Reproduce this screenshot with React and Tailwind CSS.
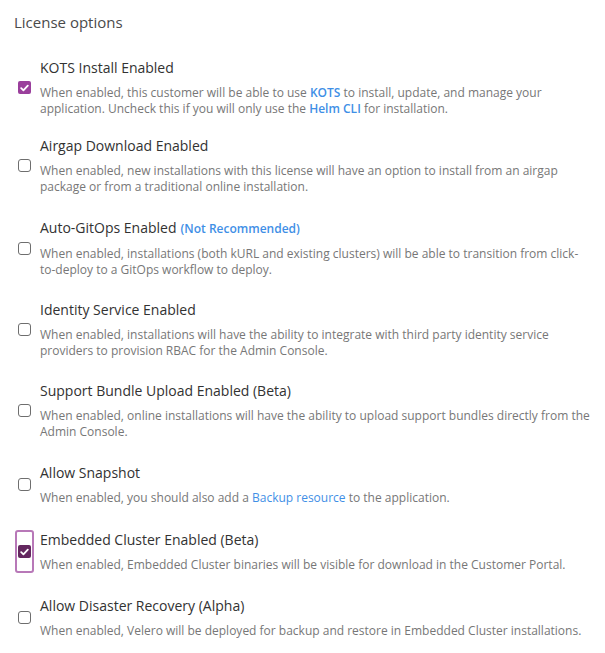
import React from "react";

const options = [
  {
    label: "KOTS Install Enabled",
    checked: true,
    desc: (
      <>
        When enabled, this customer will be able to use{" "}
        <a className="font-semibold text-[#3f8fe6]">KOTS</a> to install, update, and manage your
        application. Uncheck this if you will only use the{" "}
        <a className="font-semibold text-[#3f8fe6]">Helm CLI</a> for installation.
      </>
    ),
  },
  {
    label: "Airgap Download Enabled",
    gap: "mt-[19px]",
    desc: "When enabled, new installations with this license will have an option to install from an airgap package or from a traditional online installation.",
  },
  {
    label: "Auto-GitOps Enabled",
    note: "(Not Recommended)",
    gap: "mt-[23px]",
    desc: "When enabled, installations (both kURL and existing clusters) will be able to transition from click-to-deploy to a GitOps workflow to deploy.",
  },
  {
    label: "Identity Service Enabled",
    gap: "mt-[22px]",
    desc: "When enabled, installations will have the ability to integrate with third party identity service providers to provision RBAC for the Admin Console.",
  },
  {
    label: "Support Bundle Upload Enabled (Beta)",
    gap: "mt-[22px]",
    desc: "When enabled, online installations will have the ability to upload support bundles directly from the Admin Console.",
  },
  {
    label: "Allow Snapshot",
    gap: "mt-[23px]",
    desc: (
      <>
        When enabled, you should also add a{" "}
        <a className="text-[#3f8fe6]">Backup resource</a> to the application.
      </>
    ),
  },
  {
    label: "Embedded Cluster Enabled (Beta)",
    checked: true,
    focused: true,
    gap: "mt-[24px]",
    desc: "When enabled, Embedded Cluster binaries will be visible for download in the Customer Portal.",
  },
  {
    label: "Allow Disaster Recovery (Alpha)",
    gap: "mt-[23px]",
    desc: "When enabled, Velero will be deployed for backup and restore in Embedded Cluster installations.",
  },
];

function Checkbox({ checked, focused }) {
  const box = checked ? (
    <span
      className={`flex h-[13px] w-[13px] items-center justify-center rounded-[2px] ${
        focused ? "bg-[#63275f]" : "bg-[#9a3f9c]"
      }`}
    >
      <svg width="9" height="8" viewBox="0 0 9 8" fill="none">
        <path d="M1.2 4.2 3.4 6.3 7.8 1.6" stroke="#fff" strokeWidth="1.8" strokeLinecap="round" strokeLinejoin="round" />
      </svg>
    </span>
  ) : (
    <span className="block h-[13px] w-[13px] rounded-[3px] border-[1.5px] border-[#6e6e6e] bg-white" />
  );

  if (focused) {
    return (
      <div className="ml-px flex w-[19px] self-stretch items-center justify-center rounded-[3px] border-2 border-[#b878b8]">
        {box}
      </div>
    );
  }
  return <div className="ml-1 flex w-[13px] items-center">{box}</div>;
}

export default function App() {
  return (
    <div
      className="min-h-[653px] w-[605px] bg-white pl-[14px] pr-[12px] pt-[11px]"
      style={{ fontFamily: "'Open Sans', sans-serif" }}
    >
      <h2 className="text-[15px] leading-[22px] text-[#4a4a4a]">License options</h2>
      <div className="mt-[25px] flex flex-col">
        {options.map((opt) => (
          <div key={opt.label} className={`flex items-center ${opt.gap || ""}`}>
            <Checkbox checked={opt.checked} focused={opt.focused} />
            <div className={opt.focused ? "ml-[6px]" : "ml-[9px]"}>
              <div className="text-[14px] leading-[20px] text-[#323232]">
                {opt.label}
                {opt.note && (
                  <span className="ml-1 text-[12px] font-semibold text-[#3f8fe6]">{opt.note}</span>
                )}
              </div>
              <p className="mt-[7px] text-[12px] leading-[16px] text-[#777]">{opt.desc}</p>
            </div>
          </div>
        ))}
      </div>
    </div>
  );
}
